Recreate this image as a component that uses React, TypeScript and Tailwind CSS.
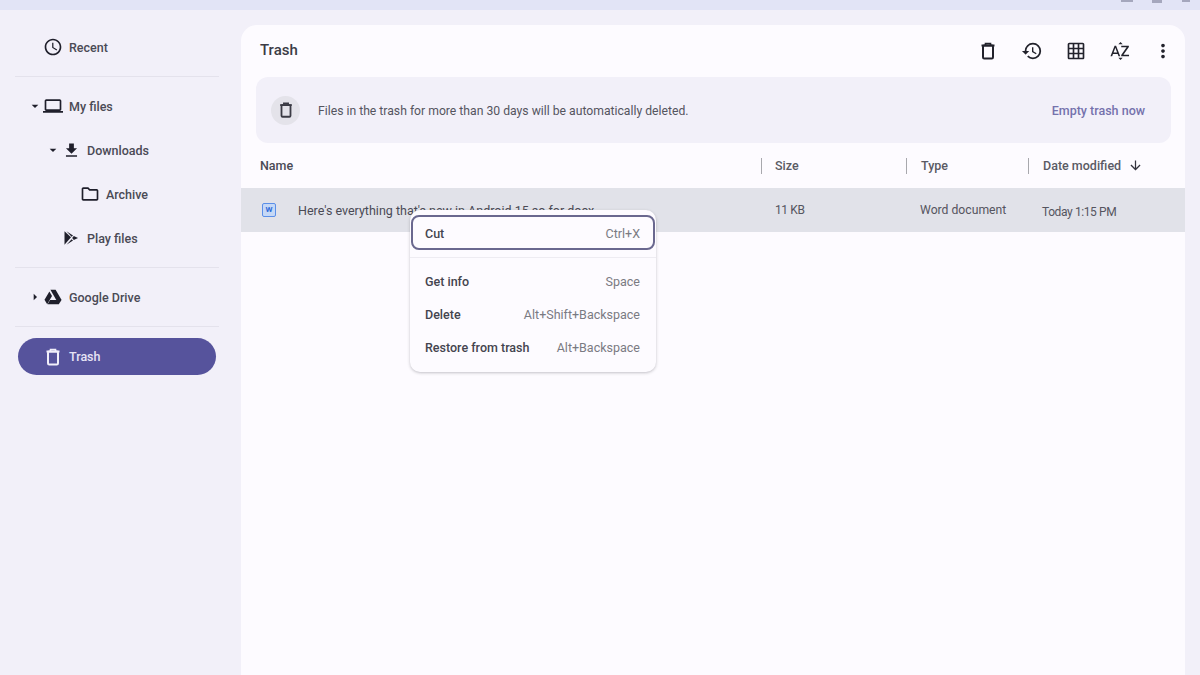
import { ReactNode } from 'react'
import {
  MdArrowDownward,
  MdArrowDropDown,
  MdArrowRight,
  MdHistory,
  MdMoreVert,
  MdOutlineAccessTime,
  MdOutlineFolder,
  MdOutlineGridOn,
  MdOutlineLaptop,
  MdSortByAlpha,
  MdFileDownload,
} from 'react-icons/md'

function TrashIcon({ className }: { className?: string }) {
  return (
    <svg viewBox="0 0 20 20" fill="none" stroke="currentColor" strokeWidth="2" className={className}>
      <path d="M3.5 4.5h13" />
      <path d="M7.5 4V2.5h5V4" strokeWidth="1.6" />
      <rect x="5" y="4.5" width="10" height="13" rx="1.2" />
    </svg>
  )
}

function PlayIcon() {
  return (
    <svg viewBox="0 0 16 16" className="w-[16px] h-[16px] text-[#1f1f2b]" fill="currentColor">
      <path d="M1.5 1.2 8 7.2 1.5 14.8Z" />
      <path d="M3.5 1.3 10 5.4 8.6 6.8Z" />
      <path d="M3.5 14.7 10 10.6 8.6 9.2Z" />
      <path d="M10.8 6 15 8l-4.2 2L9.2 8Z" />
    </svg>
  )
}

function DriveIcon() {
  return (
    <svg viewBox="0 0 18 16" className="w-[18px] h-[16px] text-[#1f1f2b]" fill="currentColor">
      <path d="M6.4 0.8h5.2l6 10.2H12.3Z" />
      <path d="M5.4 2.6 8 7 3.2 15.2 0.5 10.8Z" />
      <path d="M6 11h11.5l-2.7 4.2H3.6Z" />
    </svg>
  )
}

function NavRow({ pad, caret, icon, label }: { pad: string; caret?: ReactNode; icon: ReactNode; label: string }) {
  return (
    <div className={`h-[44px] flex items-center ${pad}`}>
      {caret}
      <span className="w-[20px] flex justify-center shrink-0">{icon}</span>
      <span className="ml-[6px] pt-[2px] text-[12.5px] font-medium text-[#4a4a55]">{label}</span>
    </div>
  )
}

function Divider() {
  return <div className="h-[1px] mx-[15px] my-[7px] w-[204px] bg-[#e4e2ec]" />
}

function Sidebar() {
  const iconClass = 'w-[20px] h-[20px] text-[#1f1f2b]'
  return (
    <aside className="w-[241px] shrink-0">
      <div className="pt-[15px]">
        <NavRow pad="pl-[43px]" icon={<MdOutlineAccessTime className={iconClass} />} label="Recent" />
        <Divider />
        <NavRow
          pad="pl-[27px]"
          caret={<MdArrowDropDown className="w-[16px] h-[16px] text-[#1f1f2b]" />}
          icon={<MdOutlineLaptop className={iconClass} />}
          label="My files"
        />
        <NavRow
          pad="pl-[45px]"
          caret={<MdArrowDropDown className="w-[16px] h-[16px] text-[#1f1f2b]" />}
          icon={<MdFileDownload className="w-[19px] h-[19px] text-[#1f1f2b]" />}
          label="Downloads"
        />
        <NavRow pad="pl-[80px]" icon={<MdOutlineFolder className={iconClass} />} label="Archive" />
        <NavRow pad="pl-[61px]" icon={<PlayIcon />} label="Play files" />
        <Divider />
        <NavRow
          pad="pl-[27px]"
          caret={<MdArrowRight className="w-[16px] h-[16px] text-[#1f1f2b]" />}
          icon={<DriveIcon />}
          label="Google Drive"
        />
        <Divider />
        <div className="mt-[11px] ml-[18px] w-[198px] h-[37px] rounded-full bg-[#56539c] flex items-center pl-[25px]">
          <TrashIcon className="w-[20px] h-[20px] text-[#f1effa]" />
          <span className="ml-[6px] pt-[2px] text-[12.5px] font-medium text-[#e6e3f5]">Trash</span>
        </div>
      </div>
    </aside>
  )
}

function Toolbar() {
  const iconClass = 'w-[22px] h-[22px] text-[#22222c]'
  return (
    <div className="h-[52px] flex items-center pl-[19px] pr-[11px]">
      <h1 className="pb-[2px] text-[15px] font-medium text-[#3b3b45] flex-1">Trash</h1>
      <div className="flex items-center gap-[22px]">
        <TrashIcon className="w-[20px] h-[20px] mx-[1px] text-[#22222c]" />
        <MdHistory className={iconClass} />
        <MdOutlineGridOn className="w-[20px] h-[20px] mx-[1px] text-[#22222c]" />
        <MdSortByAlpha className={iconClass} />
        <MdMoreVert className={`${iconClass} -ml-[1px]`} />
      </div>
    </div>
  )
}

function Banner() {
  return (
    <div className="ml-[15px] mr-[14px] h-[66px] rounded-[12px] bg-[#f2f0f9] flex items-center pl-[15px] pr-[26px]">
      <div className="w-[29px] h-[29px] rounded-full bg-[#e4e3ea] flex items-center justify-center">
        <TrashIcon className="w-[18px] h-[18px] text-[#3b3b45]" />
      </div>
      <p className="ml-[18px] pt-[2px] flex-1 text-[12.2px] text-[#55555f]">
        Files in the trash for more than 30 days will be automatically deleted.
      </p>
      <span className="pt-[2px] text-[12.5px] font-medium text-[#7572ad]">Empty trash now</span>
    </div>
  )
}

function HeaderCell({ width, label, gap, icon }: { width: string; label: string; gap: string; icon?: ReactNode }) {
  return (
    <div className={`${width} flex items-center`}>
      <span className="h-[16px] w-[1px] bg-[#a8a8ad]" />
      <span className={`${gap} pt-[1px] text-[12.5px] font-medium text-[#5a5a64]`}>{label}</span>
      {icon}
    </div>
  )
}

function FileTable() {
  return (
    <div>
      <div className="h-[45px] flex items-center pl-[19px]">
        <span className="w-[501px] pt-[1px] text-[12.5px] font-medium text-[#4a4a55]">Name</span>
        <HeaderCell width="w-[145px]" gap="ml-[13px]" label="Size" />
        <HeaderCell width="w-[122px]" gap="ml-[14px]" label="Type" />
        <HeaderCell
          width="w-[157px]"
          gap="ml-[14px]"
          label="Date modified"
          icon={<MdArrowDownward className="ml-[7px] w-[15px] h-[15px] text-[#33333d]" />}
        />
      </div>
      <div className="h-[44px] bg-[#e1e2e9] flex items-center pl-[21px] text-[12px] text-[#55555f]">
        <div className="w-[14px] h-[14px] rounded-[2px] border border-[#5b8fe8] bg-[#c5d8f6] flex items-center justify-center">
          <span className="text-[8px] font-bold leading-none text-[#2f6bd8]">W</span>
        </div>
        <span className="ml-[22px] pt-[2px] w-[477px] text-[12.5px] text-[#4a4a55]">
          Here's everything that's new in Android 15 so for docx
        </span>
        <span className="w-[145px] tracking-[-0.4px]">11 KB</span>
        <span className="w-[122px] text-[12.2px]">Word document</span>
        <span className="pt-[3px] tracking-[-0.4px]">Today 1:15 PM</span>
      </div>
    </div>
  )
}

function MenuItem({ label, shortcut, selected }: { label: string; shortcut: string; selected?: boolean }) {
  return (
    <div
      className={`flex items-center justify-between text-[12.5px] ${
        selected
          ? 'h-[35px] pt-[3px] rounded-[8px] border-2 border-[#6a688f] mx-[1px] mt-[5px] pl-[12px] pr-[13px]'
          : 'h-[33px] pt-[2px] mx-[1px] pl-[14px] pr-[15px]'
      }`}
    >
      <span className="font-medium text-[#44444e]">{label}</span>
      <span className="text-[#7a7a82]">{shortcut}</span>
    </div>
  )
}

function ContextMenu() {
  return (
    <div className="absolute left-[169px] top-[185px] w-[246px] h-[162px] rounded-[10px] bg-[#fdfbff] shadow-[0_1px_3px_rgba(60,60,70,0.3)]">
      <MenuItem label="Cut" shortcut="Ctrl+X" selected />
      <div className="h-[1px] bg-[#eeecf2] mt-[7px] mb-[7px]" />
      <MenuItem label="Get info" shortcut="Space" />
      <MenuItem label="Delete" shortcut="Alt+Shift+Backspace" />
      <MenuItem label="Restore from trash" shortcut="Alt+Backspace" />
    </div>
  )
}

export default function App() {
  return (
    <div className="w-[1200px] h-[675px] overflow-hidden bg-[#f2f0f9] flex flex-col font-['Roboto',sans-serif]">
      <div className="relative h-[10px] shrink-0 bg-[#e2e4f6]">
        <span className="absolute right-[67px] top-0 w-[12px] h-[2px] bg-[#a5a7bd]" />
        <span className="absolute right-[38px] top-0 w-[10px] h-[3px] bg-[#a5a7bd]" />
        <span className="absolute right-[10px] top-0 w-[8px] h-[2px] bg-[#a5a7bd]" />
      </div>
      <div className="flex flex-1 min-h-0">
        <Sidebar />
        <main className="relative mt-[15px] w-[944px] rounded-t-[16px] bg-[#fdfbff]">
          <Toolbar />
          <Banner />
          <FileTable />
          <ContextMenu />
        </main>
      </div>
    </div>
  )
}
